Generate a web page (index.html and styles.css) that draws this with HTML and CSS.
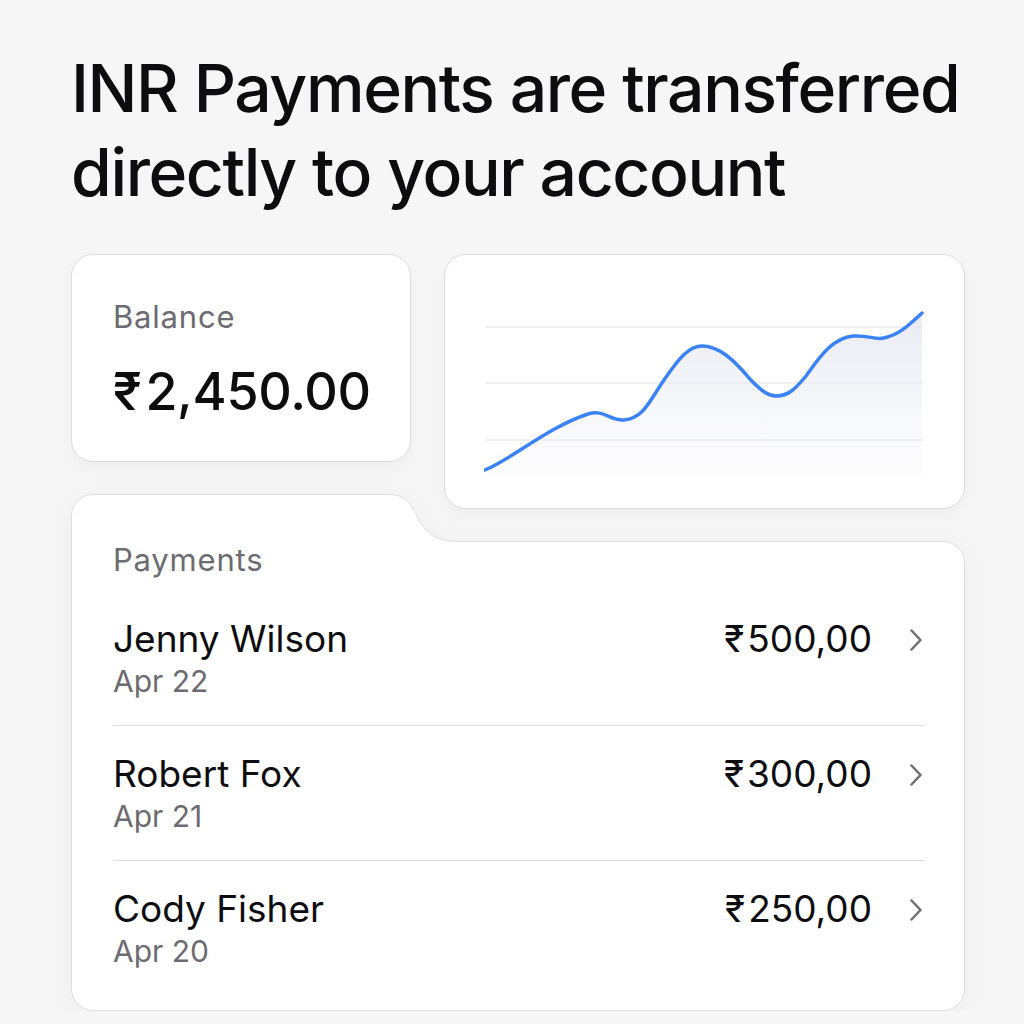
FILE: index.html
```html
<!DOCTYPE html>
<html lang="en">
<head>
    <meta charset="UTF-8">
    <meta name="viewport" content="width=device-width, initial-scale=1.0">
    <title>INR Payments</title>
    <link rel="stylesheet" href="styles.css">
</head>
<body>

    <div class="page">
        <h1 class="headline">INR Payments are transferred directly to your account</h1>

        <div class="top-row">
            <!-- Баланс -->
            <div class="card balance-card">
                <div class="muted-label">Balance</div>
                <div class="balance-amount"><span class="rupee">₹</span>2,450.00</div>
            </div>

            <!-- График -->
            <div class="card chart-card">
                <svg class="chart" width="441" height="180" viewBox="0 0 441 180">
                    <defs>
                        <linearGradient id="area" x1="0" y1="0" x2="0" y2="1">
                            <stop offset="0" stop-color="#e6e8f2" stop-opacity="0.9"/>
                            <stop offset="1" stop-color="#f3f4f8" stop-opacity="0.2"/>
                        </linearGradient>
                    </defs>
                    <line x1="1" y1="27" x2="439" y2="27" class="grid-line"/>
                    <line x1="1" y1="83" x2="439" y2="83" class="grid-line"/>
                    <line x1="1" y1="140" x2="439" y2="140" class="grid-line"/>
                    <path fill="url(#area)" d="M1,170 C30,158 62,128 104,114 C120,109 126,121 140,120 C160,118 166,100 180,80 C195,58 205,46 218,46 C235,46 250,60 265,78 C278,92 285,96 292,96 C305,96 312,88 322,76 C335,58 348,38 369,36 C385,35 390,40 400,38 C415,35 425,25 438,13 L438,176 L1,176 Z"/>
                    <path class="chart-line" d="M1,170 C30,158 62,128 104,114 C120,109 126,121 140,120 C160,118 166,100 180,80 C195,58 205,46 218,46 C235,46 250,60 265,78 C278,92 285,96 292,96 C305,96 312,88 322,76 C335,58 348,38 369,36 C385,35 390,40 400,38 C415,35 425,25 438,13"/>
                </svg>
            </div>
        </div>

        <!-- Платежи -->
        <div class="payments-card">
            <svg class="payments-shape" viewBox="0 0 894 517" preserveAspectRatio="none">
                <path d="M22,0.5 H318 C335,0.5 340,10 346,22 C354,38 362,47.5 390,47.5 H872 A21.5,21.5 0 0 1 893.5,69 V495 A21.5,21.5 0 0 1 872,516.5 H22 A21.5,21.5 0 0 1 0.5,495 V22 A21.5,21.5 0 0 1 22,0.5 Z"/>
            </svg>

            <div class="muted-label payments-title">Payments</div>

            <div class="payment-row">
                <div class="payment-info">
                    <div class="payment-name">Jenny Wilson</div>
                    <div class="payment-date">Apr 22</div>
                </div>
                <div class="payment-amount"><span class="rupee">₹</span>500,00</div>
                <svg class="chevron" width="14" height="22" viewBox="0 0 14 22"><path d="M2.5,1.5 L11.5,11 L2.5,20.5"/></svg>
            </div>

            <div class="payment-row">
                <div class="payment-info">
                    <div class="payment-name">Robert Fox</div>
                    <div class="payment-date">Apr 21</div>
                </div>
                <div class="payment-amount"><span class="rupee">₹</span>300,00</div>
                <svg class="chevron" width="14" height="22" viewBox="0 0 14 22"><path d="M2.5,1.5 L11.5,11 L2.5,20.5"/></svg>
            </div>

            <div class="payment-row">
                <div class="payment-info">
                    <div class="payment-name">Cody Fisher</div>
                    <div class="payment-date">Apr 20</div>
                </div>
                <div class="payment-amount"><span class="rupee">₹</span>250,00</div>
                <svg class="chevron" width="14" height="22" viewBox="0 0 14 22"><path d="M2.5,1.5 L11.5,11 L2.5,20.5"/></svg>
            </div>
        </div>
    </div>

</body>
</html>
```

FILE: styles.css
```css
body {
    font-family: Inter, "Noto Sans", sans-serif;
    margin: 0;
    padding: 0;
    background-color: #f6f6f7;
    color: #0d0d10;
}
.page {
    width: 894px;
    padding: 46px 0 0 71px;
}
.headline {
    margin: 0 0 40px;
    font-size: 66px;
    line-height: 84px;
    font-weight: 500;
    letter-spacing: -1.4px;
    width: 920px;
}
.top-row {
    display: flex;
    align-items: flex-start;
    gap: 33px;
}
.card {
    background-color: #fff;
    border: 1px solid #dcdcdf;
    border-radius: 22px;
    box-sizing: border-box;
    box-shadow: 0 6px 18px rgba(0, 0, 0, 0.04);
}
.balance-card {
    width: 340px;
    height: 208px;
    padding: 44px 0 0 41px;
}
.muted-label {
    font-size: 31px;
    line-height: 36px;
    letter-spacing: 0.8px;
    color: #6b6b71;
}
.balance-amount {
    margin-top: 25px;
    font-size: 52px;
    line-height: 64px;
    font-weight: 500;
    letter-spacing: -0.3px;
}
.rupee {
    margin-right: 4px;
}
.chart-card {
    width: 521px;
    height: 255px;
    padding: 45px 0 0 39px;
}
.chart {
    display: block;
}
.grid-line {
    stroke: #dedee2;
    stroke-width: 1;
}
.chart-line {
    fill: none;
    stroke: #3b82f6;
    stroke-width: 3.5;
    stroke-linecap: round;
}
.payments-card {
    position: relative;
    margin-top: -15px;
    padding: 48px 40px 16px 42px;
}
.payments-shape {
    position: absolute;
    left: 0;
    top: 0;
    width: 100%;
    height: 100%;
    z-index: -1;
    filter: drop-shadow(0 6px 12px rgba(0, 0, 0, 0.04));
}
.payments-shape path {
    fill: #fff;
    stroke: #dcdcdf;
    stroke-width: 1;
}
.payments-title {
    margin-bottom: 13px;
}
.payment-row {
    display: flex;
    align-items: flex-start;
    padding: 26px 2px 26px 0;
    border-bottom: 1px solid #dcdcdf;
}
.payment-row:last-child {
    border-bottom: none;
}
.payment-info {
    flex: 1;
}
.payment-name {
    font-size: 37px;
    line-height: 44px;
}
.payment-date {
    margin-top: 2px;
    font-size: 30px;
    line-height: 36px;
    color: #6b6b71;
}
.payment-amount {
    font-size: 37px;
    line-height: 44px;
}
.payment-amount .rupee {
    margin-right: 3px;
}
.chevron {
    margin: 12px 0 0 37px;
}
.chevron path {
    fill: none;
    stroke: #6e6e73;
    stroke-width: 2.5;
    stroke-linecap: round;
    stroke-linejoin: round;
}
```
